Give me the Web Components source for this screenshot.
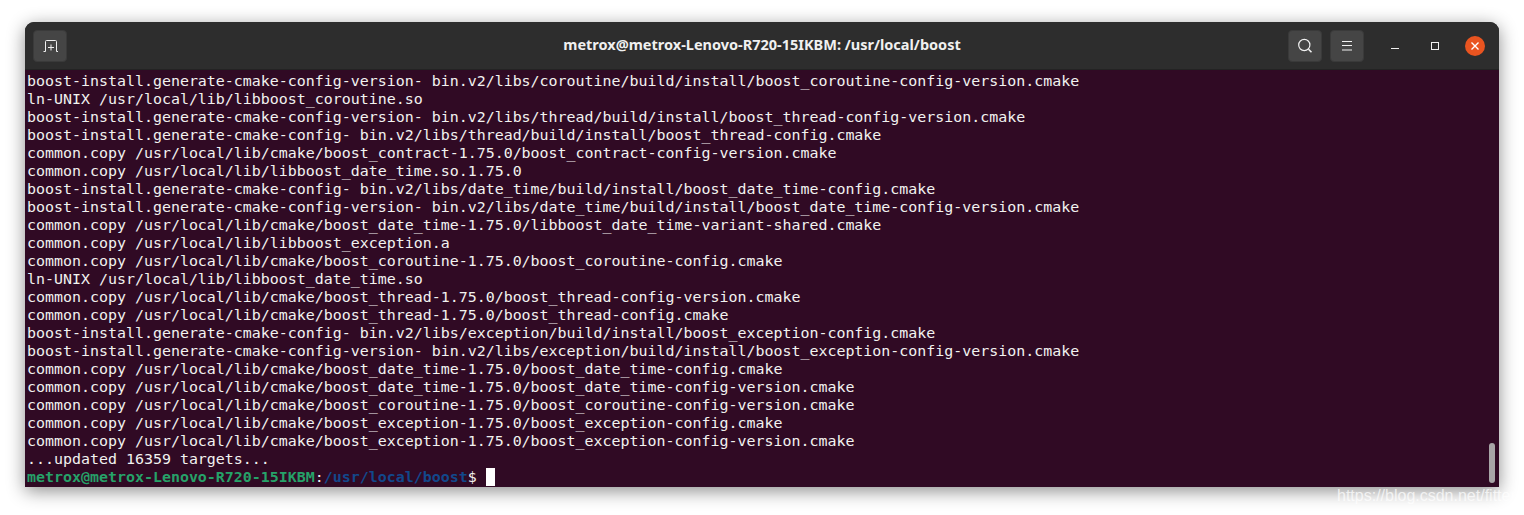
<!DOCTYPE html>
<html><head><meta charset="utf-8"><title>Terminal</title>
<style>html,body{margin:0;background:#fff;height:100%;overflow:hidden}</style></head>
<body>
<term-window title-text="metrox@metrox-Lenovo-R720-15IKBM: /usr/local/boost">
<term-screen>boost-install.generate-cmake-config-version- bin.v2/libs/coroutine/build/install/boost_coroutine-config-version.cmake
ln-UNIX /usr/local/lib/libboost_coroutine.so
boost-install.generate-cmake-config-version- bin.v2/libs/thread/build/install/boost_thread-config-version.cmake
boost-install.generate-cmake-config- bin.v2/libs/thread/build/install/boost_thread-config.cmake
common.copy /usr/local/lib/cmake/boost_contract-1.75.0/boost_contract-config-version.cmake
common.copy /usr/local/lib/libboost_date_time.so.1.75.0
boost-install.generate-cmake-config- bin.v2/libs/date_time/build/install/boost_date_time-config.cmake
boost-install.generate-cmake-config-version- bin.v2/libs/date_time/build/install/boost_date_time-config-version.cmake
common.copy /usr/local/lib/cmake/boost_date_time-1.75.0/libboost_date_time-variant-shared.cmake
common.copy /usr/local/lib/libboost_exception.a
common.copy /usr/local/lib/cmake/boost_coroutine-1.75.0/boost_coroutine-config.cmake
ln-UNIX /usr/local/lib/libboost_date_time.so
common.copy /usr/local/lib/cmake/boost_thread-1.75.0/boost_thread-config-version.cmake
common.copy /usr/local/lib/cmake/boost_thread-1.75.0/boost_thread-config.cmake
boost-install.generate-cmake-config- bin.v2/libs/exception/build/install/boost_exception-config.cmake
boost-install.generate-cmake-config-version- bin.v2/libs/exception/build/install/boost_exception-config-version.cmake
common.copy /usr/local/lib/cmake/boost_date_time-1.75.0/boost_date_time-config.cmake
common.copy /usr/local/lib/cmake/boost_date_time-1.75.0/boost_date_time-config-version.cmake
common.copy /usr/local/lib/cmake/boost_coroutine-1.75.0/boost_coroutine-config-version.cmake
common.copy /usr/local/lib/cmake/boost_exception-1.75.0/boost_exception-config.cmake
common.copy /usr/local/lib/cmake/boost_exception-1.75.0/boost_exception-config-version.cmake
...updated 16359 targets...
<term-prompt></term-prompt></term-screen>
</term-window>
<script>
class TermPrompt extends HTMLElement{constructor(){super();this.attachShadow({mode:'open'}).innerHTML=`<style>
:host{display:inline-flex;align-items:center;height:18px}
b{font-weight:700}.u{color:#26a269}.p{color:#12488b}.c{display:inline-block;width:9px;height:18px;background:#fff;margin-left:9px}
</style><b class="u">metrox@metrox-Lenovo-R720-15IKBM</b><span>:</span><b class="p">/usr/local/boost</b><span>$</span><span class="c"></span>`}}
customElements.define('term-prompt',TermPrompt);
class TermScreen extends HTMLElement{constructor(){super();this.attachShadow({mode:'open'}).innerHTML=`<style>
:host{display:block;position:relative;flex:1;min-height:0;background:#300a24;color:#f2f2f0;padding:2px 0 0 2px;overflow:hidden;
font:14.95px/18px "DejaVu Sans Mono",monospace;white-space:pre}
.bar{position:absolute;right:4px;top:373px;width:6px;height:40px;border-radius:3px;background:#a8a5a7}
</style><slot></slot><div class="bar"></div>`}}
customElements.define('term-screen',TermScreen);
class HeaderButton extends HTMLElement{constructor(){super();this.attachShadow({mode:'open'}).innerHTML=`<style>
:host{display:flex;align-items:center;justify-content:center;width:34px;height:32px;box-sizing:border-box;border-radius:4px;background:#454545;border:1px solid #3a3a3a}
</style><slot></slot>`}}
customElements.define('header-button',HeaderButton);
class TermWindow extends HTMLElement{constructor(){super();const t=this.getAttribute('title-text');this.attachShadow({mode:'open'}).innerHTML=`<style>
:host{display:flex;flex-direction:column;box-sizing:border-box;width:1474px;height:465px;margin:22px 0 0 25px;border-radius:9px 9px 0 0;overflow:hidden;box-shadow:0 4px 18px rgba(0,0,0,.45);background:#2d2d2d;position:relative}
header{height:48px;flex:none;display:flex;align-items:center;padding:0 4px 0 8px;box-sizing:border-box;background:#2d2d2d;border-bottom:1px solid #232323;color:#f0f0f0}
.side{flex:1 1 0;display:flex;align-items:center}
.right{justify-content:flex-end}
.title{flex:none;text-align:center;font:700 14.5px "Noto Sans",sans-serif;padding:0 4px 3px 0}
.gap{margin-left:8px}
.w{width:40px;height:24px;display:flex;align-items:center;justify-content:center}
.w:first-of-type{margin-left:11px}
.close{width:20px;height:20px;border-radius:50%;background:#e95420;display:flex;align-items:center;justify-content:center}
svg{display:block;fill:none;stroke:#f0f0f0;stroke-width:1}
</style>
<header>
<div class="side"><header-button><svg width="16" height="16" viewBox="0 0 16 16"><path d="M1.5 13.5h2V3.5a1 1 0 0 1 1-1h9a1 1 0 0 1 1 1v10h1.5M6 9.5h6M9 6.5v6"/></svg></header-button></div>
<div class="title">${t}</div>
<div class="side right">
<header-button><svg width="16" height="16" viewBox="0 0 16 16"><circle cx="7.3" cy="7" r="5.6" stroke-width="1.2"/><path d="M11.5 11.2l3 3" stroke-width="1.6"/></svg></header-button>
<header-button class="gap"><svg width="12" height="12" viewBox="0 0 12 12"><path d="M1 1.5h10M1 5.5h10M1 10h10"/></svg></header-button>
<div class="w"><svg width="10" height="10" viewBox="0 0 10 10"><path d="M1 7.5h8"/></svg></div>
<div class="w"><svg width="10" height="10" viewBox="0 0 10 10"><rect x="1.5" y="1.5" width="7" height="7"/></svg></div>
<div class="w"><div class="close"><svg width="10" height="10" viewBox="0 0 10 10" style="stroke:#fff;stroke-width:1.4"><path d="M1.5 1.5l7 7M8.5 1.5l-7 7"/></svg></div></div>
</div>
</header><slot></slot>`}}
customElements.define('term-window',TermWindow);
class WaterMark extends HTMLElement{constructor(){super();this.attachShadow({mode:'open'}).innerHTML=`<style>
:host{position:absolute;left:1337px;top:486px;font:16px/20px "Liberation Sans",sans-serif;color:rgba(255,255,255,.72);white-space:nowrap;width:187px;overflow:hidden}
</style>https://blog.csdn.net/fitter`}}
customElements.define('water-mark',WaterMark);
document.body.appendChild(document.createElement('water-mark'));
</script>
</body></html>
